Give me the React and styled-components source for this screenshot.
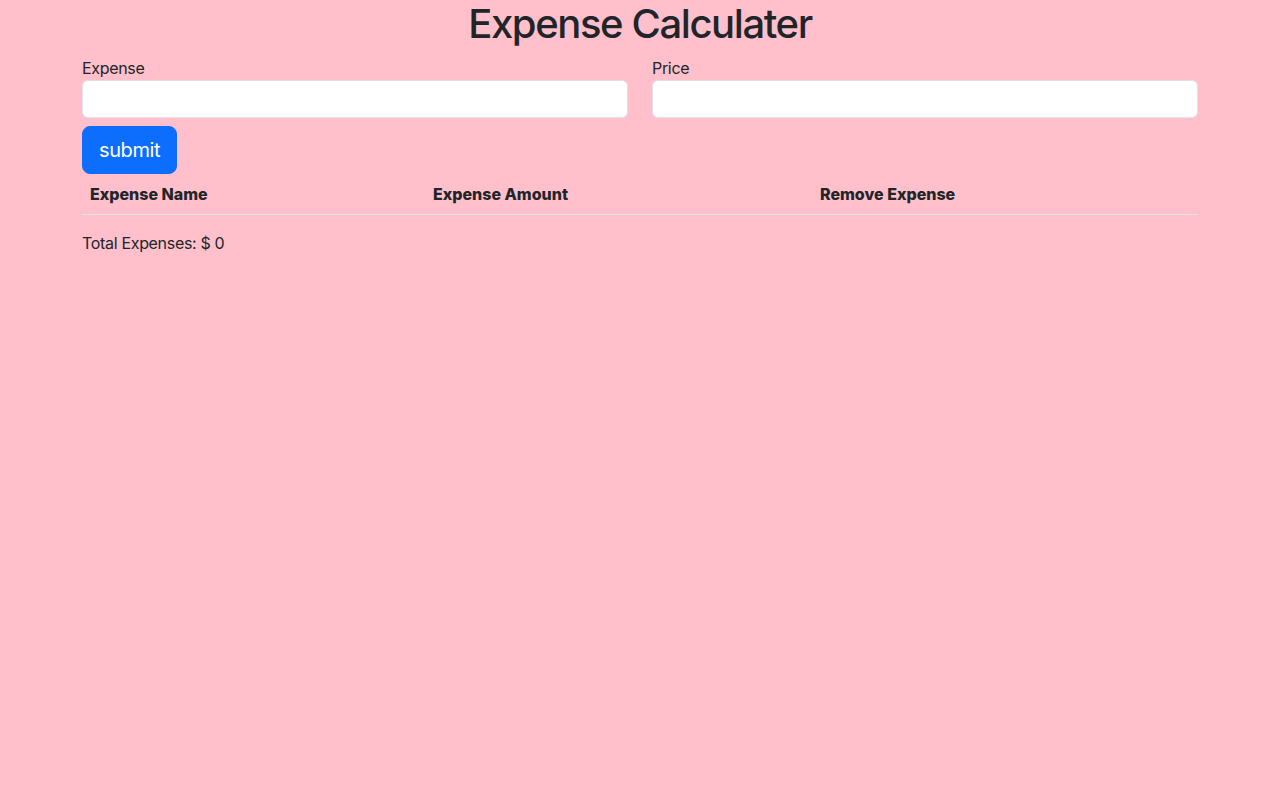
import React, { useState } from 'react';
import styled, { createGlobalStyle } from 'styled-components';

const Global = createGlobalStyle`
  * { box-sizing: border-box; }
  body {
    margin: 0;
    background: pink;
    color: #212529;
    font-family: Inter, "Noto Sans", sans-serif;
    font-size: 16px;
    line-height: 1.5;
    letter-spacing: -0.02em;
  }
`;

const Container = styled.div`
  max-width: 1140px;
  margin: 0 auto;
  padding: 0 12px;
`;

const Title = styled.h1`
  margin: 0 0 8px;
  font-size: 40px;
  font-weight: 500;
  line-height: 1.2;
  letter-spacing: -0.035em;
  text-align: center;
`;

const Row = styled.div`
  display: grid;
  grid-template-columns: 1fr 1fr;
  column-gap: 24px;
`;

const Field = styled.div`
  display: flex;
  flex-direction: column;
`;

const Label = styled.label`
  font-size: 16px;
  line-height: 24px;
`;

const Input = styled.input`
  height: 38px;
  padding: 6px 12px;
  font: inherit;
  background: #fff;
  border: 1px solid #dee2e6;
  border-radius: 6px;
  outline: none;
`;

const Button = styled.button`
  margin-top: 8px;
  padding: 8px 16px;
  font-family: inherit;
  font-size: 20px;
  line-height: 30px;
  letter-spacing: -0.02em;
  color: #fff;
  background: #0d6efd;
  border: 1px solid #0d6efd;
  border-radius: 8px;
  cursor: pointer;
`;

const Table = styled.table`
  width: 100%;
  margin-bottom: 16px;
  border-collapse: collapse;
`;

const Th = styled.th`
  width: ${(p) => p.w || 'auto'};
  padding: 8px;
  text-align: left;
  font-weight: 800;
  letter-spacing: 0;
  border-bottom: 1px solid #dee2e6;
`;

const Total = styled.p`
  margin: 0;
`;

const App = () => {
  const [items] = useState([]);
  const total = items.reduce((s, i) => s + Number(i.price), 0);
  return (
    <Container>
      <Global />
      <Title>Expense Calculater</Title>
      <Row>
        <Field>
          <Label>Expense</Label>
          <Input type="text" />
        </Field>
        <Field>
          <Label>Price</Label>
          <Input type="number" />
        </Field>
      </Row>
      <Button>submit</Button>
      <Table>
        <thead>
          <tr>
            <Th w="343px">Expense Name</Th>
            <Th w="387px">Expense Amount</Th>
            <Th>Remove Expense</Th>
          </tr>
        </thead>
        <tbody></tbody>
      </Table>
      <Total>Total Expenses: $ {total}</Total>
    </Container>
  );
};

export default App;
